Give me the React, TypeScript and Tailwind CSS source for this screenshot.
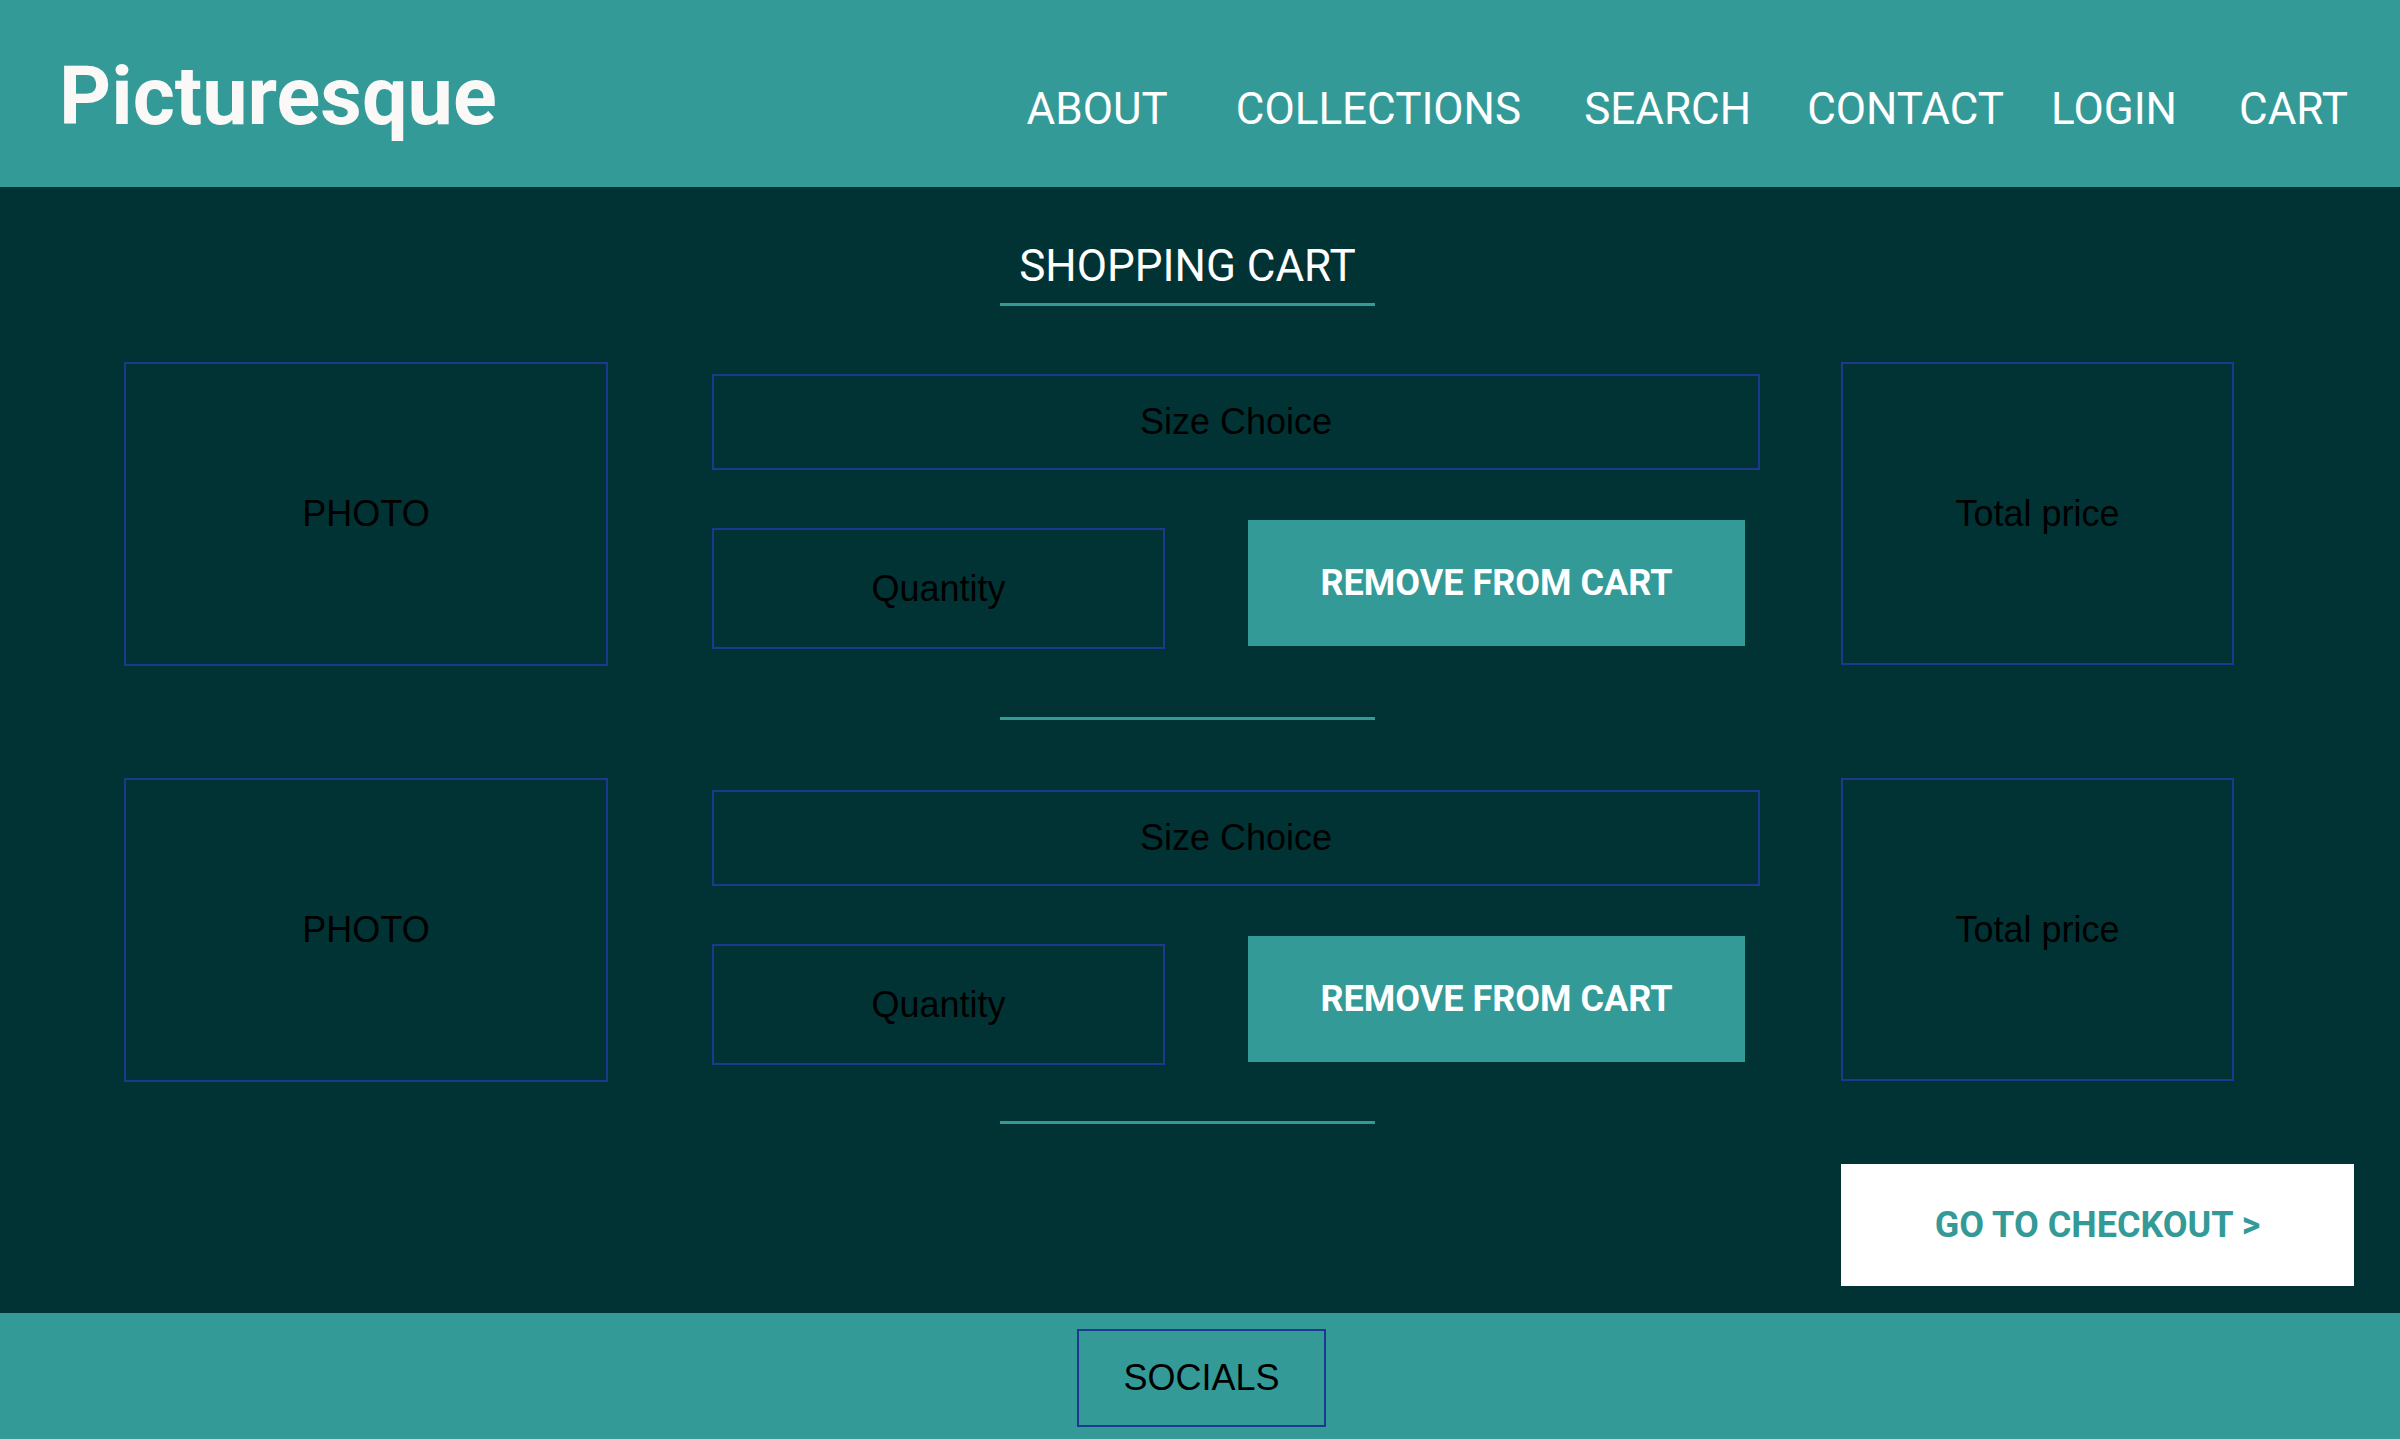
import React from 'react';

const navLinks = [
  { label: 'ABOUT', ml: 'ml-0' },
  { label: 'COLLECTIONS', ml: 'ml-[68px]' },
  { label: 'SEARCH', ml: 'ml-[63px]' },
  { label: 'CONTACT', ml: 'ml-[56px]' },
  { label: 'LOGIN', ml: 'ml-[47px]' },
  { label: 'CART', ml: 'ml-[62px]' },
];

const boxText = "font-['Liberation_Sans',Arial,sans-serif] text-[36px] text-black";

const CartRow: React.FC = () => {
  return (
    <div className="flex items-start pl-[124px]">
      <div className={`flex h-[304px] w-[484px] items-center justify-center border-2 border-blue-900 ${boxText}`}>
        PHOTO
      </div>
      <div className="ml-[104px] flex w-[1048px] flex-col pt-[12px]">
        <div className={`flex h-[96px] items-center justify-center border-2 border-blue-900 ${boxText}`}>
          Size Choice
        </div>
        <div className="mt-[50px] flex items-start">
          <div className={`mt-[8px] flex h-[121px] w-[453px] items-center justify-center border-2 border-blue-900 ${boxText}`}>
            Quantity
          </div>
          <button className="ml-[83px] flex h-[126px] w-[497px] items-center justify-center bg-[#349a98] text-[36px] font-bold text-white">
            REMOVE FROM CART
          </button>
        </div>
      </div>
      <div className={`ml-[81px] flex h-[303px] w-[393px] items-center justify-center border-2 border-blue-900 ${boxText}`}>
        Total price
      </div>
    </div>
  );
};

const Divider: React.FC<{ className?: string }> = ({ className }) => (
  <div className={`ml-[1000px] h-[3px] w-[375px] bg-[#349a98] ${className ?? ''}`} />
);

const App: React.FC = () => {
  return (
    <div className="flex min-h-[1439px] flex-col bg-[#013335] font-['Roboto',sans-serif]">
      <header className="flex h-[187px] items-baseline bg-[#349a98] pl-[59px] pr-[52px] pt-[56px]">
        <h1 className="text-[81px] font-bold leading-none text-[#faf9f8]">Picturesque</h1>
        <nav className="ml-auto flex items-baseline">
          {navLinks.map((l) => (
            <a key={l.label} href="#" className={`${l.ml} text-[44px] leading-none text-white`}>
              {l.label}
            </a>
          ))}
        </nav>
      </header>

      <main className="flex flex-1 flex-col">
        <div className="ml-[1000px] mt-[52px] w-[375px] border-b-[3px] border-[#349a98] pb-[10px] text-center text-[44px] leading-[54px] text-white">
          SHOPPING CART
        </div>

        <div className="mt-[56px]">
          <CartRow />
        </div>
        <Divider className="mt-[51px]" />

        <div className="mt-[58px]">
          <CartRow />
        </div>
        <Divider className="mt-[39px]" />

        <div className="mt-[40px] flex justify-end pr-[46px]">
          <button className="flex h-[122px] w-[513px] items-center justify-center bg-white text-[36px] font-bold text-[#349a98]">
            GO TO CHECKOUT &gt;
          </button>
        </div>
      </main>

      <footer className="flex h-[126px] justify-center bg-[#349a98] pl-[3px] pt-[16px]">
        <div className={`flex h-[98px] w-[249px] items-center justify-center border-2 border-blue-900 ${boxText}`}>
          SOCIALS
        </div>
      </footer>
    </div>
  );
};

export default App;
